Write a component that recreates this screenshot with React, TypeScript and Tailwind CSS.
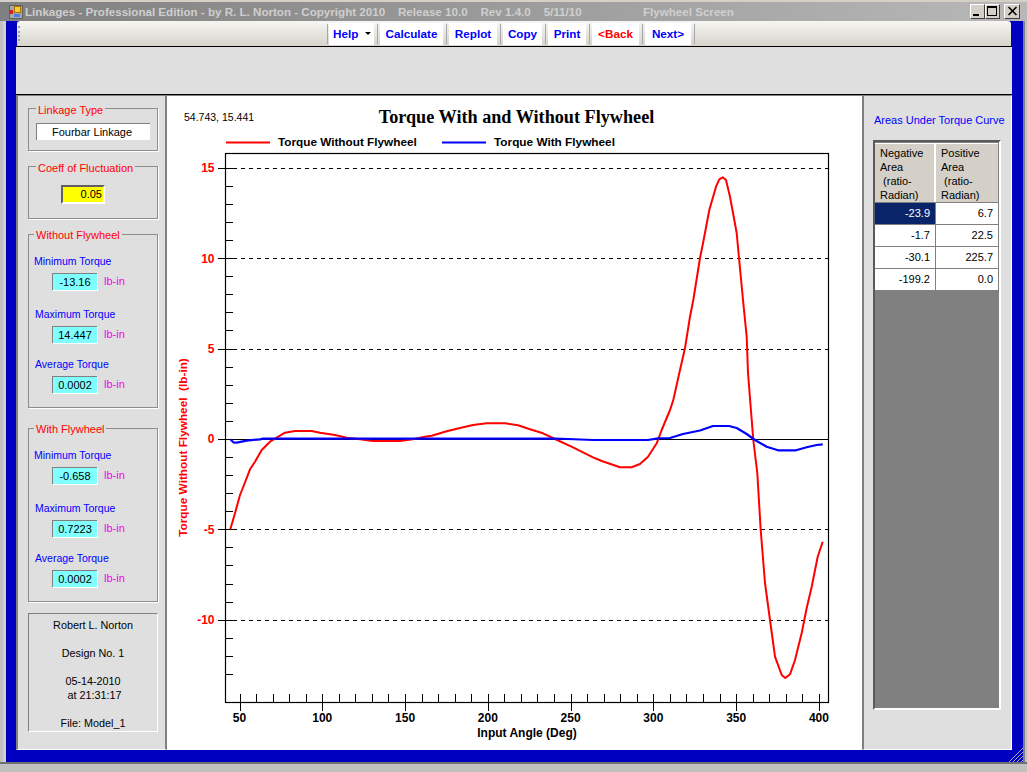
import { ReactNode } from 'react'

const SANS = 'font-["Liberation_Sans",Arial,sans-serif]'

const TOOLBAR = [
  { label: 'Calculate', w: 'w-[63px]', color: 'text-[#0000ff]' },
  { label: 'Replot', w: 'w-[48px]', color: 'text-[#0000ff]' },
  { label: 'Copy', w: 'w-[39px]', color: 'text-[#0000ff]' },
  { label: 'Print', w: 'w-[38px]', color: 'text-[#0000ff]' },
  { label: '<Back', w: 'w-[47px]', color: 'text-[#ff0000]' },
  { label: 'Next>', w: 'w-[46px]', color: 'text-[#0000ff]' },
]

// curves traced in screen pixels, viewBox below is aligned to the page
const RED =
  '230.3,529.3 235,513.3 240,495 244,485 250,469.3 255,461.7 261.7,450 270,441.7 276.7,437.7 285,432.7 295,431 311.7,431 320,432.7 335,435 346.7,437.7 360,439.3 373,441 400,441 413,439.3 425,436.7 431.7,435.7 446.7,431.3 460,428 473,425 486.7,423.3 505,423.3 518,425.3 530,429.3 543,433.3 555,439 573,447.3 593,457.3 601.7,461 620,467.3 631.7,467.3 640,464 648,456.7 656.7,443.3 661.7,430 670,410 673.3,400 680,370 685,348 690,316.7 693.3,300 700,258 703.3,241.7 709.3,210 716,186.7 719.3,179.3 722.7,177.3 726,180 730,196.7 736.7,233 739,258 743.3,303 746.7,336.7 748,373 753.3,440 757.3,473 760.7,530 765,583 770,620 775,656.7 781.7,675 785.3,678 790,674.3 795,660 801.7,633 806.7,608 811.7,586.7 817.7,556.7 822.7,541.7'
const BLUE =
  '230.3,439.3 233.3,442.3 236.7,442.7 246.7,440.7 260,439.3 263,438.7 555,438.5 593,440 648,440 658,438.3 670,438 683,434 700,430.5 713,426 729,426 736.7,428 746.7,434 755,440 766.7,446.7 778,450.3 796,450.3 806.7,447.3 816.7,445 822.7,444.3'

const yMajor = [15, 10, 5, 0, -5, -10]
const xMajor = [50, 100, 150, 200, 250, 300, 350, 400]
const yPos = (v: number) => 438.9 - v * 18.08
const xPos = (a: number) => 239.5 + (a - 50) * 1.6555

function Group({ title, legend, className, children }: { title: string; legend: string; className: string; children: ReactNode }) {
  return (
    <fieldset className={`w-[130px] border border-[#8c8c8c] shadow-[1px_1px_0_#fff] ${className}`}>
      <legend className={`px-[2px] text-[11px] leading-[13px] text-[#ff0000] ${legend}`}>{title}</legend>
      {children}
    </fieldset>
  )
}

function Reading({ label, value, indent }: { label: string; value: string; indent: string }) {
  return (
    <div className="h-[53px]">
      <div className={`text-[10.5px] leading-[14px] text-[#0000ff] ${indent}`}>{label}</div>
      <div className="mt-[5px] flex items-center">
        <div className="ml-[23px] flex h-[17px] w-[45px] items-center justify-center border-t border-l border-[#808080] bg-[#80ffff] text-[11px] text-black shadow-[1px_1px_0_#fff]">
          {value}
        </div>
        <span className="ml-[7px] text-[11px] text-[#f000f0]">lb-in</span>
      </div>
    </div>
  )
}

function TorqueGroup({ title, values, className }: { title: string; values: string[]; className: string }) {
  return (
    <Group title={title} legend="ml-[5px] translate-y-[1px]" className={`h-[180px] pt-[13px] ${className}`}>
      <Reading label="Minimum Torque" value={values[0]} indent="ml-[5px]" />
      <Reading label="Maximum Torque" value={values[1]} indent="ml-[6px]" />
      <div className="-mt-[3px]">
        <Reading label="Average Torque" value={values[2]} indent="ml-[6px]" />
      </div>
    </Group>
  )
}

function Chart() {
  const minorY: number[] = []
  for (let v = -13; v <= 14; v++) if (v % 5 !== 0) minorY.push(v)
  const minorX: number[] = []
  for (let a = 50; a <= 400; a += 10) if (a % 50 !== 0) minorX.push(a)
  const labelFont = { fontFamily: '"Liberation Sans", Arial, sans-serif' }

  return (
    <svg className="block h-[654px] w-[695px] shrink-0" viewBox="167 95 695 654">
      <line x1="167" x2="862" y1="95.5" y2="95.5" stroke="#808080" />
      <text x="184" y="121" fontSize="10.5" fill="#000" style={labelFont}>54.743, 15.441</text>
      <text x="516.5" y="123" fontSize="18.2" fontWeight="700" textAnchor="middle" fill="#000" style={{ fontFamily: '"Liberation Serif", "Times New Roman", serif' }}>
        Torque With and Without Flywheel
      </text>
      <line x1="226" x2="270" y1="142.5" y2="142.5" stroke="#ff0000" strokeWidth="2" />
      <text x="278" y="146" fontSize="11.75" fontWeight="700" style={labelFont}>Torque Without Flywheel</text>
      <line x1="442" x2="486" y1="142.5" y2="142.5" stroke="#0000ff" strokeWidth="2" />
      <text x="494" y="146" fontSize="11.8" fontWeight="700" style={labelFont}>Torque With Flywheel</text>

      <rect x="225.5" y="153.5" width="603" height="549" fill="none" stroke="#000" strokeWidth="1.2" />

      {yMajor.map((v) => (
        <g key={v}>
          <line x1="218" x2="233" y1={Math.round(yPos(v)) + 0.5} y2={Math.round(yPos(v)) + 0.5} stroke="#000" />
          {v !== 0 && (
            <line x1="233" x2="828" y1={Math.round(yPos(v)) + 0.5} y2={Math.round(yPos(v)) + 0.5} stroke="#000" strokeDasharray="4 4" />
          )}
          <text x="214.5" y={yPos(v) + 4.5} fontSize="12" fontWeight="700" fill="#ff0000" textAnchor="end" style={labelFont}>{v}</text>
        </g>
      ))}
      <line x1="225" x2="828" y1="439.5" y2="439.5" stroke="#000" />
      {minorY.map((v) => (
        <line key={v} x1="225" x2="233" y1={Math.round(yPos(v)) + 0.5} y2={Math.round(yPos(v)) + 0.5} stroke="#000" />
      ))}

      {xMajor.map((a) => (
        <g key={a}>
          <line x1={Math.round(xPos(a)) + 0.5} x2={Math.round(xPos(a)) + 0.5} y1="694" y2="711" stroke="#000" />
          <text x={xPos(a)} y="722" fontSize="12" fontWeight="700" textAnchor="middle" style={labelFont}>{a}</text>
        </g>
      ))}
      {minorX.map((a) => (
        <line key={a} x1={Math.round(xPos(a)) + 0.5} x2={Math.round(xPos(a)) + 0.5} y1="694" y2="702" stroke="#000" />
      ))}

      <polyline points={RED} fill="none" stroke="#ff0000" strokeWidth="2" strokeLinejoin="round" />
      <polyline points={BLUE} fill="none" stroke="#0000ff" strokeWidth="2.2" strokeLinejoin="round" />

      <text x="527" y="737" fontSize="12" fontWeight="700" textAnchor="middle" style={labelFont}>Input Angle (Deg)</text>
      <text transform="translate(187 447.5) rotate(-90)" fontSize="11.8" fontWeight="700" fill="#ff0000" textAnchor="middle" style={labelFont} xmlSpace="preserve">
        Torque Without Flywheel  (lb-in)
      </text>
    </svg>
  )
}

const ROWS = [
  ['-23.9', '6.7'],
  ['-1.7', '22.5'],
  ['-30.1', '225.7'],
  ['-199.2', '0.0'],
]

function AreaGrid() {
  return (
    <div className="ml-[9px] mt-[13px] h-[570px] w-[128px] border-2 border-t-[#5a5a5a] border-l-[#5a5a5a] border-r-white border-b-white bg-[#808080] pt-[1px]">
      <div className="grid w-[123px] grid-cols-[61px_62px] border-t border-white text-[11px] text-black">
        <div className="h-[58px] border-r-2 border-r-white bg-[#d4d0c8] pl-[5px] pt-[2px] leading-[14px] whitespace-pre">{'Negative\nArea\n (ratio-\nRadian)'}</div>
        <div className="h-[58px] bg-[#d4d0c8] pl-[5px] pt-[2px] leading-[14px] whitespace-pre">{'Positive\nArea\n (ratio-\nRadian)'}</div>
        {ROWS.map(([neg, pos], i) => (
          <div key={i} className="contents">
            <div className={`mt-[1px] mr-[1px] flex h-[21px] items-center justify-end pr-[5px] ${i === 0 ? 'bg-[#0a246a] text-white' : 'bg-white'}`}>{neg}</div>
            <div className="mt-[1px] flex h-[21px] items-center justify-end bg-white pr-[5px]">{pos}</div>
          </div>
        ))}
      </div>
    </div>
  )
}

function WinButton({ className, children }: { className: string; children: ReactNode }) {
  return (
    <div className={`flex h-[15px] items-center justify-center border border-t-white border-l-white border-r-[#404040] border-b-[#404040] bg-[#d4d0c8] ${className}`}>
      <svg className="h-[13px] w-[13px]" viewBox="0 0 13 13">{children}</svg>
    </div>
  )
}

export default function App() {
  return (
    <div className={`relative flex h-[772px] w-[1027px] flex-col overflow-hidden bg-[#c0c0c0] ${SANS}`}>
      <div className="flex h-[21px] shrink-0 items-center border-t-2 border-t-[#d4d0c8] bg-gradient-to-r from-[#808080] to-[#b8b8b8] pl-[9px] pr-[7px]">
        <svg className="h-[14px] w-[14px] shrink-0" viewBox="0 0 14 14">
          <rect x="0.5" y="0.5" width="13" height="13" fill="#a8a8a8" stroke="#606060" />
          <rect x="5.5" y="1.5" width="6" height="6" fill="#ffcc33" stroke="#a07000" />
          <rect x="1" y="5" width="3" height="4" fill="#d02020" />
          <rect x="5" y="9" width="6" height="3" fill="#4a80f0" />
        </svg>
        <span className="ml-[2px] w-[618px] shrink-0 whitespace-pre text-[11.6px] font-bold leading-none text-[#cfcfcf]">
          Linkages - Professional Edition - by R. L. Norton - Copyright 2010    Release 10.0    Rev 1.4.0    5/11/10
        </span>
        <span className="whitespace-pre text-[11.6px] font-bold leading-none text-[#cfcfcf]">Flywheel Screen</span>
        <div className="ml-auto flex items-center">
          <WinButton className="w-[15px]">
            <rect x="2" y="9" width="6" height="2" fill="#000" />
          </WinButton>
          <WinButton className="w-[15px]">
            <rect x="1.5" y="1.5" width="9" height="9" fill="none" stroke="#000" />
            <rect x="1" y="1" width="10" height="2" fill="#000" />
          </WinButton>
          <WinButton className="ml-[4px] w-[16px]">
            <path d="M2.5 2 L10.5 10 M10.5 2 L2.5 10" stroke="#000" strokeWidth="1.6" fill="none" />
          </WinButton>
        </div>
      </div>

      <div className="flex h-[741px] shrink-0">
        <div className="w-[6px] shrink-0 border-l-[3px] border-l-[#c0c0c0] bg-[#d4d0c8]" />
        <div className="flex w-[1017px] shrink-0 flex-col bg-[#0000c0] pl-[10px] pr-[11px] pb-[12px]">
          <div className="ml-[1px] flex h-[25px] w-[994px] shrink-0 items-center rounded-t-[3px] bg-gradient-to-b from-[#f7f6f3] to-[#d6d3cb] pl-[1px]">
            <div className="h-[15px] w-[3px] border-l-2 border-dotted border-[#a0a0a0]" />
            <div className="ml-[306px] h-[20px] w-[1px] bg-[#a8a8a8]" />
            <div className="ml-[1px] flex h-[22px] w-[45px] items-center bg-white pl-[4px] text-[11.7px] font-bold text-[#0000ff]">
              Help
              <span className="ml-[7px] h-0 w-0 border-x-[3px] border-t-[3px] border-x-transparent border-t-black" />
            </div>
            {TOOLBAR.map((b) => (
              <div key={b.label} className="flex items-center">
                <div className="ml-[3px] h-[20px] w-[1px] bg-[#a8a8a8]" />
                <div className={`ml-[2px] flex h-[22px] items-center justify-center bg-white text-[11.7px] font-bold ${b.w} ${b.color}`}>
                  {b.label}
                </div>
              </div>
            ))}
            <div className="ml-[3px] h-[20px] w-[1px] bg-[#a8a8a8]" />
          </div>

          <div className="h-[49px] w-[996px] shrink-0 border-y border-y-black bg-[#dfdfdf]" />

          <div className="flex min-h-0 flex-1 bg-white">
            <div className="w-[151px] shrink-0 border-x-2 border-y border-l-[#808080] border-r-[#808080] border-t-[#808080] border-b-white bg-[#dfdfdf] pl-[10px]">
              <Group title="Linkage Type" legend="ml-[7px] translate-y-[2px]" className="mt-[6px] h-[49px]">
                <div className="ml-[7px] mt-[8px] flex h-[17px] w-[114px] items-center justify-center border-t border-l border-[#808080] bg-white pr-[3px] text-[11px]">
                  Fourbar Linkage
                </div>
              </Group>
              <Group title="Coeff of Fluctuation" legend="ml-[7px] translate-y-[2px]" className="mt-[9px] h-[59px]">
                <div className="ml-[32px] mt-[12px] flex h-[19px] w-[44px] items-center justify-end border-2 border-t-[#606060] border-l-[#606060] border-r-white border-b-white bg-[#ffff00] pr-[1px] text-[11px]">
                  0.05
                </div>
              </Group>
              <TorqueGroup title="Without Flywheel" values={['-13.16', '14.447', '0.0002']} className="mt-[9px]" />
              <TorqueGroup title="With Flywheel" values={['-0.658', '0.7223', '0.0002']} className="mt-[14px]" />
              <div className="mt-[11px] h-[119px] w-[130px] border border-t-[#808080] border-l-[#808080] border-r-white border-b-white pt-[4px] text-center text-[10.8px] leading-[14px] whitespace-pre">
                {'Robert L. Norton\n\nDesign No. 1\n\n05-14-2010\n at 21:31:17\n\nFile: Model_1'}
              </div>
            </div>
            <Chart />
            <div className="w-[150px] shrink-0 border-y border-l-2 border-r border-l-[#808080] border-t-[#808080] border-r-white border-b-white bg-[#dfdfdf]">
              <div className="ml-[10px] mt-[17px] whitespace-nowrap text-[11px] leading-[14px] text-[#0000ff]">Areas Under Torque Curve</div>
              <AreaGrid />
            </div>
          </div>
        </div>
        <div className="w-[4px] shrink-0 border-l-2 border-l-[#808080] bg-[#c0c0c0]" />
      </div>
      <div className="h-[10px] shrink-0 border-t-2 border-t-[#707070] bg-[#c0c0c0]" />

      {/* resize grip sits over the window corner */}
      <svg className="absolute left-[1008px] top-[747px] h-[15px] w-[15px]" viewBox="0 0 15 15">
        <path d="M1 15 L15 1 M5 15 L15 5 M9 15 L15 9 M13 15 L15 13" stroke="#b0b0b0" fill="none" />
      </svg>
    </div>
  )
}
